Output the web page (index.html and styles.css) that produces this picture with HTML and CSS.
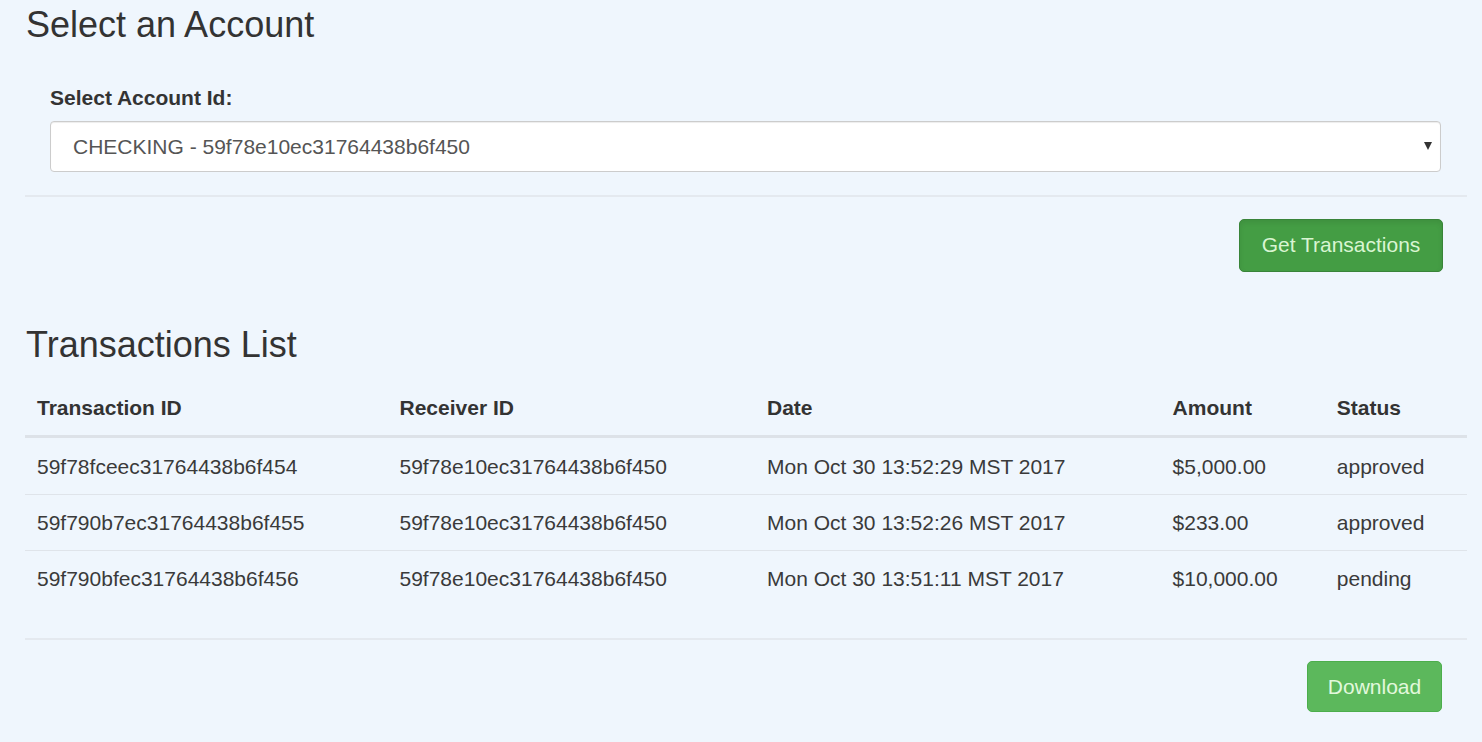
FILE: index.html
```html
<!DOCTYPE html>
<html lang="en">
<head>
<meta charset="utf-8">
<title>Transactions</title>
<link rel="stylesheet" href="styles.css">
</head>
<body>
<div class="page">
  <h3 class="title">Select an Account</h3>
  <form class="account-form">
    <div class="form-group">
      <label class="label" for="acct">Select Account Id:</label>
      <div class="select-wrap">
        <select id="acct" class="select">
          <option>CHECKING - 59f78e10ec31764438b6f450</option>
        </select>
      </div>
    </div>
  </form>
  <hr class="rule rule-top">
  <div class="actions actions-top">
    <button class="btn btn-dark" type="button">Get Transactions</button>
  </div>

  <h3 class="title title-list">Transactions List</h3>
  <table class="table">
    <thead>
      <tr>
        <th class="c-tx">Transaction ID</th>
        <th class="c-rx">Receiver ID</th>
        <th class="c-date">Date</th>
        <th class="c-amt">Amount</th>
        <th class="c-status">Status</th>
      </tr>
    </thead>
    <tbody>
      <tr>
        <td>59f78fceec31764438b6f454</td>
        <td>59f78e10ec31764438b6f450</td>
        <td>Mon Oct 30 13:52:29 MST 2017</td>
        <td>$5,000.00</td>
        <td>approved</td>
      </tr>
      <tr>
        <td>59f790b7ec31764438b6f455</td>
        <td>59f78e10ec31764438b6f450</td>
        <td>Mon Oct 30 13:52:26 MST 2017</td>
        <td>$233.00</td>
        <td>approved</td>
      </tr>
      <tr>
        <td>59f790bfec31764438b6f456</td>
        <td>59f78e10ec31764438b6f450</td>
        <td>Mon Oct 30 13:51:11 MST 2017</td>
        <td>$10,000.00</td>
        <td>pending</td>
      </tr>
    </tbody>
  </table>
  <hr class="rule rule-bottom">
  <div class="actions actions-bottom">
    <button class="btn btn-light" type="button">Download</button>
  </div>
</div>
</body>
</html>
```

FILE: styles.css
```css
* { box-sizing: border-box; }

html, body {
  margin: 0;
  padding: 0;
  background: #eff6fd;
}

body {
  font-family: "Liberation Sans", Arial, Helvetica, sans-serif;
  font-size: 21px;
  line-height: 1.42857;
  color: #3a3a3a;
}

.page {
  width: 1442px;
  margin-left: 25px;
  padding-top: 5px;
}

.title {
  margin: 0;
  font-size: 36px;
  font-weight: 400;
  line-height: 1.1;
  color: #333;
  padding-left: 1px;
}

.account-form {
  margin-top: 38px;
  padding: 0 26px 0 25px;
}

.form-group {
  margin: 0;
}

.label {
  display: block;
  font-weight: 700;
  margin-bottom: 8px;
  line-height: 30px;
  color: #333;
}

.select-wrap {
  position: relative;
}

.select-wrap::after {
  content: "";
  position: absolute;
  right: 9px;
  top: 21px;
  border-left: 4px solid transparent;
  border-right: 4px solid transparent;
  border-top: 8px solid #333;
  pointer-events: none;
}

.select {
  display: block;
  width: 100%;
  height: 51px;
  padding: 0 22px;
  font-family: inherit;
  font-size: 21px;
  color: #555;
  background: #fff;
  border: 1px solid #ccc;
  border-radius: 4px;
  box-shadow: inset 0 1px 1px rgba(0,0,0,.075);
  -webkit-appearance: none;
  appearance: none;
  outline: none;
}

.rule {
  border: 0;
  border-top: 2px solid #e4e9ef;
  margin: 0;
}

.rule-top {
  margin-top: 23px;
}

.actions {
  display: flex;
  justify-content: flex-end;
  padding-right: 24px;
}

.actions-top {
  margin-top: 22px;
  margin-bottom: 53px;
}

.btn {
  font-family: inherit;
  font-size: 21px;
  line-height: 30px;
  padding: 10px 18px;
  border-radius: 5px;
  cursor: pointer;
}

.btn-dark {
  height: 53px;
  width: 204px;
  background: #449d44;
  border: 1px solid #398439;
  color: #d9f5d2;
  box-shadow: inset 0 3px 5px rgba(0,0,0,.08);
}

.btn-light {
  height: 51px;
  width: 135px;
  background: #5cb85c;
  border: 1px solid #4cae4c;
  color: #e2f8dc;
}

.table {
  width: 100%;
  margin-top: 17px;
  border-collapse: collapse;
  border-spacing: 0;
}

.table th,
.table td {
  text-align: left;
  padding: 12px 12px;
  line-height: 30px;
  vertical-align: top;
}

.table th {
  font-weight: 700;
  color: #333;
  border-bottom: 3px solid #dde2e8;
}

.table td {
  border-top: 1px solid #dfe4ea;
  padding-top: 13px;
  padding-bottom: 12px;
}

.table tbody tr:first-child td {
  border-top: 0;
  padding-top: 14px;
}

.c-tx { width: 362px; }
.c-rx { width: 367px; }
.c-date { width: 405px; }
.c-amt { width: 164px; }
.c-status { width: 142px; }

.rule-bottom {
  margin-top: 32px;
}

.actions-bottom {
  margin-top: 21px;
  padding-right: 25px;
}
```
